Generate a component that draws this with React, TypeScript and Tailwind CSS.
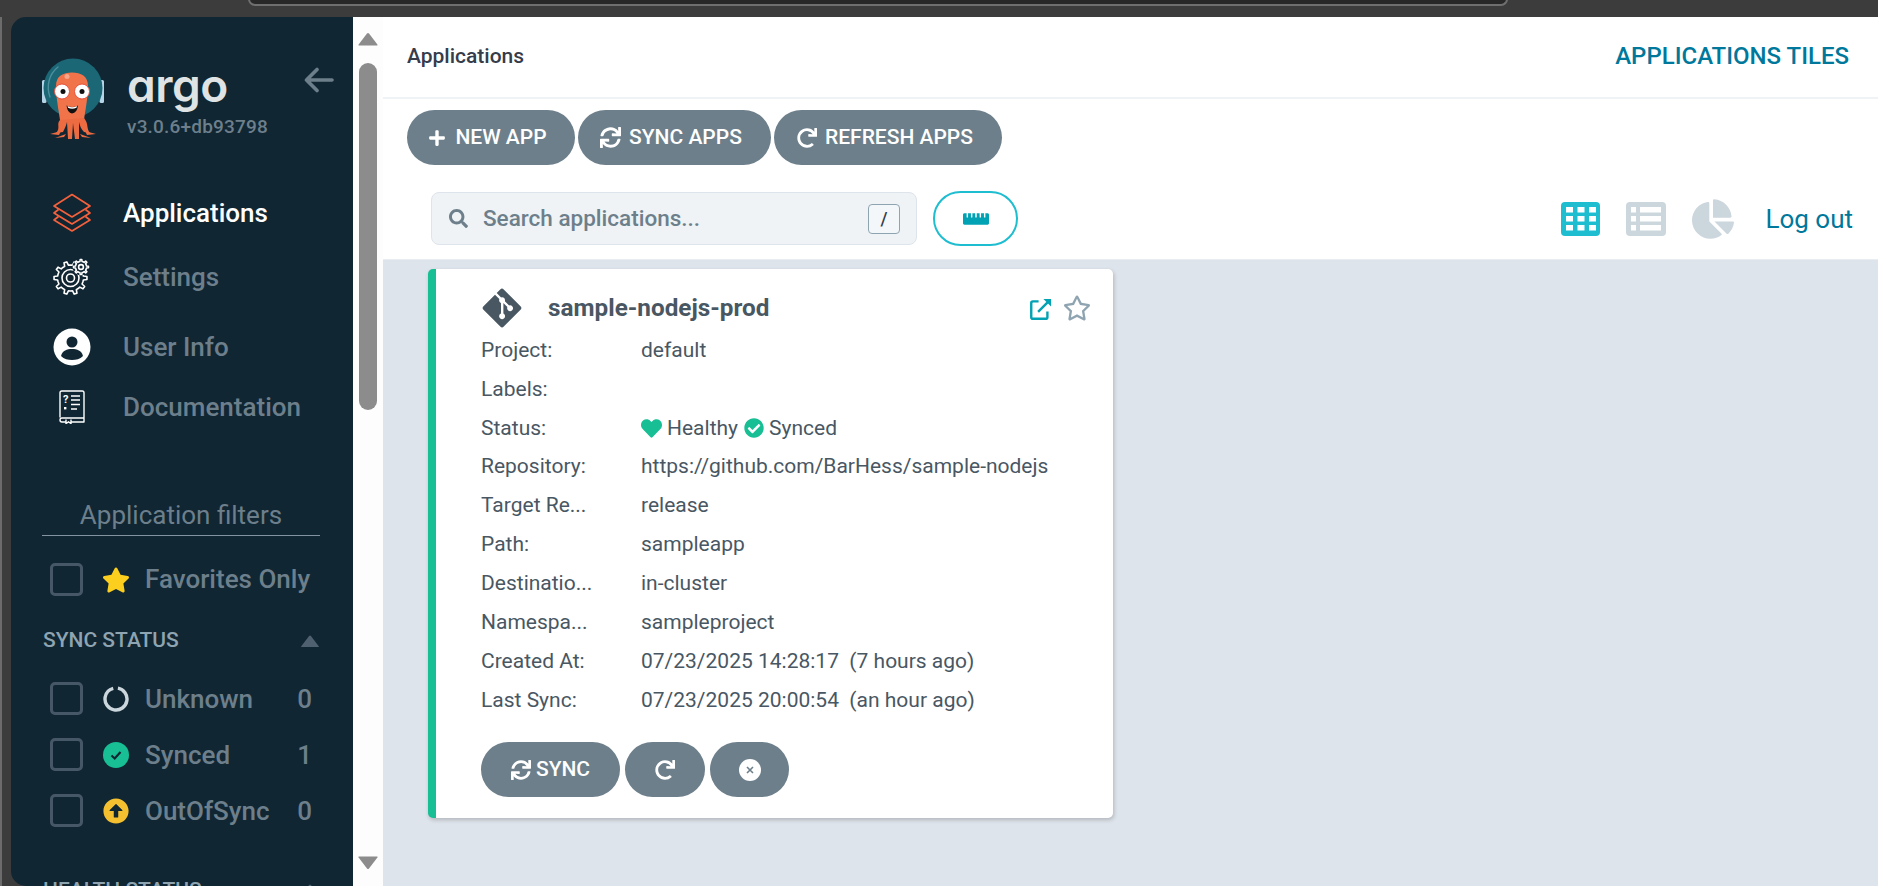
import React from "react";
import { FaSync, FaRedo, FaPlus, FaSearch, FaRulerHorizontal, FaChartPie, FaHeart, FaCheckCircle, FaRegStar, FaStar, FaArrowAltCircleUp, FaGitAlt } from "react-icons/fa";

function gearPath(cx: number, cy: number, ro: number, ri: number, n: number) {
  const pts: string[] = [];
  for (let i = 0; i < n; i++) {
    const a = (i / n) * Math.PI * 2;
    const s = (Math.PI * 2) / n;
    const seq: [number, number][] = [
      [ri, a - s * 0.5],
      [ri, a - s * 0.24],
      [ro, a - s * 0.14],
      [ro, a + s * 0.14],
      [ri, a + s * 0.24],
    ];
    for (const [r, t] of seq) pts.push(`${(cx + r * Math.cos(t)).toFixed(2)} ${(cy + r * Math.sin(t)).toFixed(2)}`);
  }
  return "M" + pts.join("L") + "Z";
}

function ArgoLogo() {
  return (
    <svg width="90" height="100" viewBox="0 0 90 100" className="shrink-0">
      <rect x="12" y="30" width="4.5" height="23" rx="1.5" fill="#b5d3e6" />
      <rect x="69.5" y="30" width="4.5" height="23" rx="1.5" fill="#b5d3e6" />
      <circle cx="43" cy="38" r="29.5" fill="#1b6776" />
      <path d="M20 47 C16 36 19 24 28 17" fill="none" stroke="#4d8f9c" strokeWidth="1.4" strokeLinecap="round" />
      <path d="M26 36 C26 26 33 22.5 42 22.5 C51 22.5 58 26 58 36 C58 48 55 62 54 70 L30 70 C29 62 26 48 26 36 Z" fill="#f0734a" />
      <path d="M30 70 C26 74 31 78 26 83 L33 82 C35 78 36 76 37 72 L38 89 L42 89 L43 73 L45 89 L49 89 L49 72 C50 76 51 79 54 82 L60 83 C56 78 59 74 54 68 Z" fill="#ec6b41" />
      <path d="M20 84 L31 81 L29 85 Z M25 88 L36 84 L34 87 Z M66 84 L55 81 L57 85 Z M61 88 L50 84 L52 87 Z" fill="#ec6b41" />
      <circle cx="37" cy="26.5" r="2.5" fill="#f8a78a" />
      <circle cx="32" cy="41.5" r="7.5" fill="#fff" stroke="#e9503a" strokeWidth="1" />
      <circle cx="52" cy="41.5" r="7.5" fill="#fff" stroke="#e9503a" strokeWidth="1" />
      <circle cx="33" cy="41.5" r="2.5" fill="#111" />
      <circle cx="52" cy="41.5" r="2.5" fill="#111" />
      <path d="M36.5 55.5 Q42 58.5 48 55.5 Q47 63 42 63.5 Q37.5 63 36.5 55.5 Z" fill="#111" />
      <path d="M37.5 56 Q42 58.5 47 56 L46.5 57.8 Q42 59.8 38 57.8 Z" fill="#fff" />
    </svg>
  );
}

function LayersIcon() {
  return (
    <svg width="40" height="40" viewBox="0 0 40 40" fill="none" stroke="#f4603c" strokeWidth="1.7" strokeLinejoin="round">
      <path d="M20 1.5 L38 13 L20 24 L2 13 Z" />
      <path d="M6.5 16.5 L2 20 L20 31 L38 20 L33.5 16.5" />
      <path d="M6.5 23.5 L2 27 L20 38 L38 27 L33.5 23.5" />
    </svg>
  );
}

function GearsIcon() {
  return (
    <svg width="40" height="40" viewBox="0 0 40 40" fill="none" stroke="#fff" strokeWidth="1.6" strokeLinejoin="round" className="translate-x-[1px]">
      <path d={gearPath(17.5, 21, 16.5, 13, 10)} />
      <circle cx="17.5" cy="21" r="8.5" />
      <circle cx="17.5" cy="21" r="4" />
      <circle cx="28" cy="10" r="8.5" fill="#102633" stroke="none" />
      <path d={gearPath(28, 10, 7.5, 5.6, 8)} />
      <circle cx="28" cy="10" r="2.4" />
    </svg>
  );
}

function UserIcon() {
  return (
    <svg width="38" height="38" viewBox="0 0 38 38">
      <circle cx="19" cy="19" r="18.5" fill="#fff" />
      <circle cx="19" cy="14" r="5.5" fill="#102633" />
      <path d="M8 28 C9.5 22.5 14 21 19 21 C24 21 28.5 22.5 30 28 C27 31 23 32 19 32 C15 32 11 31 8 28 Z" fill="#102633" />
    </svg>
  );
}

function DocIcon() {
  return (
    <svg width="26" height="34" viewBox="0 0 26 34" fill="none" stroke="#fff" strokeWidth="1.4">
      <path d="M1 27.5 V2.8 Q1 1 2.8 1 H23.2 Q25 1 25 2.8 V28 H3 Q1 28 1 30 Q1 32 3 32 H7 M12 32 H25 V28" strokeLinejoin="round" />
      <path d="M7 29.5 V33.5 L9.5 31.8 L12 33.5 V29.5" />
      <path d="M12 6 H21 M12 10 H21 M12 14.5 H21 M12 19 H18" strokeWidth="1.6" />
      <text x="4" y="13" fill="#fff" stroke="none" fontSize="11" fontWeight="700" fontFamily="Roboto, sans-serif">?</text>
      <rect x="5" y="17" width="2.4" height="2.4" fill="#fff" stroke="none" />
    </svg>
  );
}

function Tri({ down, color, w, h }: { down?: boolean; color: string; w: number; h: number }) {
  return (
    <svg width={w} height={h} viewBox="0 0 20 14" className="shrink-0">
      <path d={down ? "M1 1 H19 Q20 1 19.4 2 L11 13 Q10 14 9 13 L0.6 2 Q0 1 1 1 Z" : "M1 13 H19 Q20 13 19.4 12 L11 1 Q10 0 9 1 L0.6 12 Q0 13 1 13 Z"} fill={color} />
    </svg>
  );
}

function Check() {
  return <span className="block w-[33px] h-[33px] shrink-0 rounded-[5px] border-[3px] border-[#465868]" />;
}

function FilterRow({ icon, label, count, lift }: { icon: React.ReactNode; label: string; count?: string; lift?: boolean }) {
  return (
    <div className="flex items-center h-[33px] pl-[39px] w-[301px]">
      <Check />
      <span className="w-[28px] ml-[19px] flex justify-center shrink-0">{icon}</span>
      <span className={`ml-[15px] text-[26px] font-medium text-[#6d7f8b] flex-1 whitespace-nowrap leading-none ${lift ? "pb-[2px]" : ""}`}>{label}</span>
      {count && <span className="text-[26px] font-medium text-[#6d7f8b] leading-none">{count}</span>}
    </div>
  );
}

function NavRow({ icon, label, active, className }: { icon: React.ReactNode; label: string; active?: boolean; className?: string }) {
  return (
    <div className={`flex items-center h-[40px] pl-[41px] ${className ?? ""}`}>
      <span className="w-[40px] flex justify-center shrink-0">{icon}</span>
      <span className={`ml-[31px] text-[26px] font-medium leading-none ${active ? "text-white" : "text-[#6d7f8b]"}`}>{label}</span>
    </div>
  );
}

function Pill({ children, className }: { children: React.ReactNode; className?: string }) {
  return (
    <button className={`h-[55px] rounded-full bg-[#6d7f8b] text-white text-[21px] font-medium flex items-center justify-center shrink-0 ${className ?? ""}`}>
      {children}
    </button>
  );
}

function Info({ k, children }: { k: string; children?: React.ReactNode }) {
  return (
    <div className="flex items-center h-[38.85px] text-[21px] text-[#495763] leading-none whitespace-nowrap">
      <span className="w-[160px] shrink-0">{k}</span>
      <span className="flex items-center">{children}</span>
    </div>
  );
}

export default function App() {
  return (
    <div className="w-[1878px] h-[886px] overflow-hidden flex flex-col bg-[#3c3c3c] font-['Roboto',sans-serif]">
      <div className="h-[17px] shrink-0">
        <div className="ml-[248px] w-[1260px] h-[7px] -mt-[1px] bg-[#282828] border-x-2 border-b-2 border-[#6f6f6f] rounded-b-[14px]" />
      </div>
      <div className="flex flex-1 min-h-0 border-l-2 border-[#6c6c6c] pl-[9px]">
        <aside className="w-[342px] shrink-0 overflow-hidden rounded-l-[15px] bg-[#102633]">
          <div className="flex pt-[33px] pl-[19px]">
            <ArgoLogo />
            <div className="ml-[7px] flex flex-col">
              <span className="text-[#dfe3e3] text-[46px] font-semibold leading-[46px] mt-[12px] font-['Inter',sans-serif] [font-feature-settings:'cv11'] tracking-[-0.5px]">argo</span>
              <span className="text-[#6d7f8b] text-[19px] font-medium leading-none mt-[9px] tracking-[0.2px]">v3.0.6+db93798</span>
            </div>
            <svg width="30" height="26" viewBox="0 0 30 26" className="ml-[36px] mt-[17px]" fill="none" stroke="#6d7f8b" strokeWidth="3.6" strokeLinecap="round" strokeLinejoin="round">
              <path d="M28 13 H3 M13 2.5 L2.5 13 L13 23.5" />
            </svg>
          </div>
          <NavRow className="mt-[43px]" icon={<LayersIcon />} label="Applications" active />
          <NavRow className="mt-[24px]" icon={<GearsIcon />} label="Settings" />
          <NavRow className="mt-[30px]" icon={<UserIcon />} label="User Info" />
          <NavRow className="mt-[20px]" icon={<DocIcon />} label="Documentation" />

          <div className="mt-[68px] ml-[31px] w-[278px] h-[41px] border-b border-[#8393a0] flex items-center justify-center text-[26px] text-[#6d7f8b] leading-none">
            Application filters
          </div>
          <div className="mt-[27px]">
            <FilterRow lift icon={<FaStar size={28} color="#fccf1f" />} label="Favorites Only" />
          </div>
          <div className="mt-[33px] h-[24px] pl-[32px] w-[309px] flex items-center justify-between">
            <span className="text-[21px] font-medium text-[#8fa4b1] leading-none pb-[2px]">SYNC STATUS</span>
            <Tri color="#4f6070" w={20} h={13} />
          </div>
          <div className="mt-[29px] flex flex-col gap-[23px]">
            <FilterRow
              icon={
                <svg width="26" height="26" viewBox="0 0 26 26" fill="none">
                  <circle cx="13" cy="13" r="11" stroke="#ccd6dd" strokeWidth="3.4" strokeDasharray="64 5" transform="rotate(-80 13 13)" />
                </svg>
              }
              label="Unknown"
              count="0"
            />
            <FilterRow
              icon={
                <svg width="26" height="26" viewBox="0 0 26 26">
                  <circle cx="13" cy="13" r="13" fill="#18be94" />
                  <path d="M8.5 13.5 L11.7 16.5 L17.5 10" fill="none" stroke="#102633" strokeWidth="2.2" />
                </svg>
              }
              label="Synced"
              count="1"
            />
            <FilterRow icon={<FaArrowAltCircleUp size={26} color="#f4c030" />} label="OutOfSync" count="0" />
          </div>
          <div className="mt-[51px] h-[24px] pl-[32px] w-[309px] flex items-center justify-between">
            <span className="text-[21px] font-medium text-[#8fa4b1] leading-none">HEALTH STATUS</span>
            <Tri color="#4f6070" w={20} h={13} />
          </div>
        </aside>

        <div className="w-[30px] shrink-0 bg-[#fdfdfd] flex flex-col items-center pt-[15px] pb-[16px]">
          <Tri color="#8c8c8c" w={20} h={15} />
          <div className="mt-[16px] w-[18px] h-[347px] rounded-[9px] bg-[#8c8c8c]" />
          <div className="flex-1" />
          <Tri down color="#8c8c8c" w={20} h={15} />
        </div>

        <main className="flex-1 min-w-0 flex flex-col bg-[#dee4eb]">
          <div className="bg-white shrink-0">
            <header className="h-[82px] border-b-2 border-[#eff3f5] flex items-center justify-between pl-[24px] pr-[29px] pb-[2px]">
              <span className="text-[21px] font-medium text-[#363c4a] pt-[2px]">Applications</span>
              <span className="text-[24px] font-medium text-[#00789b]">APPLICATIONS TILES</span>
            </header>
            <div className="flex gap-[3px] pl-[24px] pt-[11px]">
              <Pill className="w-[168px] gap-[9px] pr-[7px]">
                <FaPlus size={18} />
                <span>NEW APP</span>
              </Pill>
              <Pill className="w-[193px] gap-[8px] pr-[7px]">
                <FaSync size={21} />
                <span>SYNC APPS</span>
              </Pill>
              <Pill className="w-[228px] gap-[8px] pr-[6px]">
                <FaRedo size={20} />
                <span>REFRESH APPS</span>
              </Pill>
            </div>
            <div className="flex items-center h-[55px] mt-[26px] mb-[13px] pl-[48px] pr-[25px]">
              <div className="w-[486px] h-[53px] bg-[#eff3f5] border border-[#dee4eb] rounded-[8px] flex items-center pl-[17px] pr-[16px]">
                <FaSearch size={19} color="#6d7f8b" />
                <span className="ml-[15px] text-[22.5px] font-medium text-[#6d7f8b] flex-1">Search applications...</span>
                <span className="w-[32px] h-[30px] border border-[#8fa4b1] rounded-[4px] flex items-center justify-center text-[18px] font-medium text-[#363c4a] bg-[#f4f7f9]">/</span>
              </div>
              <button className="ml-[16px] w-[85px] h-[55px] rounded-full bg-white border-2 border-[#1fbdd0] flex items-center justify-center">
                <FaRulerHorizontal size={26} color="#00a2b3" />
              </button>
              <div className="flex-1" />
              <svg width="39" height="34" viewBox="0 0 39 34">
                <rect width="39" height="34" rx="4" fill="#1fbdd0" />
                {[5, 14, 23].map((y) => [5, 16.5, 28].map((x) => <rect key={`${x}-${y}`} x={x} y={y} width="7" height="5.5" fill="#fff" />))}
              </svg>
              <svg width="40" height="34" viewBox="0 0 40 34" className="ml-[26px]">
                <rect width="40" height="34" rx="4" fill="#ccd6dd" />
                {[5, 14, 23].map((y) => (
                  <g key={y}>
                    <rect x="5" y={y} width="5" height="5.5" fill="#fff" />
                    <rect x="14" y={y} width="21" height="5.5" fill="#fff" />
                  </g>
                ))}
              </svg>
              <span className="ml-[26px] flex"><FaChartPie size={42} color="#ccd6dd" /></span>
              <span className="ml-[31px] text-[26px] text-[#00789b] leading-none">Log out</span>
            </div>
          </div>

          <div className="pl-[45px] pt-[9px] border-t border-[#e9edf1]">
            <section className="w-[685px] h-[549px] bg-white rounded-[5px] border-l-[8px] border-[#18be94] shadow-[1px_2px_4px_rgba(0,0,0,0.2)] pl-[45px] pt-[21px]">
              <div className="flex items-center h-[37px] mb-[4px]">
                <span className="-ml-[1px] -mt-[2px] flex"><FaGitAlt size={44} color="#495763" /></span>
                <span className="ml-[24px] text-[24.3px] font-bold text-[#495763] leading-none">sample-nodejs-prod</span>
                <div className="flex-1" />
                <svg width="22" height="22" viewBox="0 0 23 23" fill="none" stroke="#00a2b3" strokeWidth="2.5" className="mr-[11px]">
                  <path d="M9 3.5 H3 Q1.3 3.5 1.3 5.2 V20 Q1.3 21.7 3 21.7 H16.5 Q18.2 21.7 18.2 20 V14" />
                  <path d="M8.5 14.5 L21 2" />
                  <path d="M14 1 H22 V9 Z" fill="#00a2b3" stroke="none" />
                </svg>
                <span className="mr-[22px] mb-[2px] flex"><FaRegStar size={28} color="#8fa4b1" /></span>
              </div>
              <Info k="Project:">default</Info>
              <Info k="Labels:" />
              <Info k="Status:">
                <FaHeart size={21} color="#18be94" />
                <span className="ml-[5px]">Healthy</span>
                <FaCheckCircle size={20} color="#18be94" className="ml-[6px]" />
                <span className="ml-[5px]">Synced</span>
              </Info>
              <Info k="Repository:">https://github.com/BarHess/sample-nodejs</Info>
              <Info k="Target Re...">release</Info>
              <Info k="Path:">sampleapp</Info>
              <Info k="Destinatio...">in-cluster</Info>
              <Info k="Namespa...">sampleproject</Info>
              <Info k="Created At:">07/23/2025 14:28:17&nbsp;&nbsp;(7 hours ago)</Info>
              <Info k="Last Sync:">07/23/2025 20:00:54&nbsp;&nbsp;(an hour ago)</Info>
              <div className="flex gap-[5px] mt-[23px]">
                <Pill className="w-[139px] gap-[5px]">
                  <FaSync size={20} />
                  <span>SYNC</span>
                </Pill>
                <Pill className="w-[80px]">
                  <FaRedo size={20} />
                </Pill>
                <Pill className="w-[79px]">
                  <svg width="22" height="22" viewBox="0 0 22 22">
                    <circle cx="11" cy="11" r="11" fill="#fff" />
                    <path d="M8 8 L14 14 M14 8 L8 14" stroke="#6d7f8b" strokeWidth="1.6" />
                  </svg>
                </Pill>
              </div>
            </section>
          </div>
        </main>
      </div>
    </div>
  );
}
